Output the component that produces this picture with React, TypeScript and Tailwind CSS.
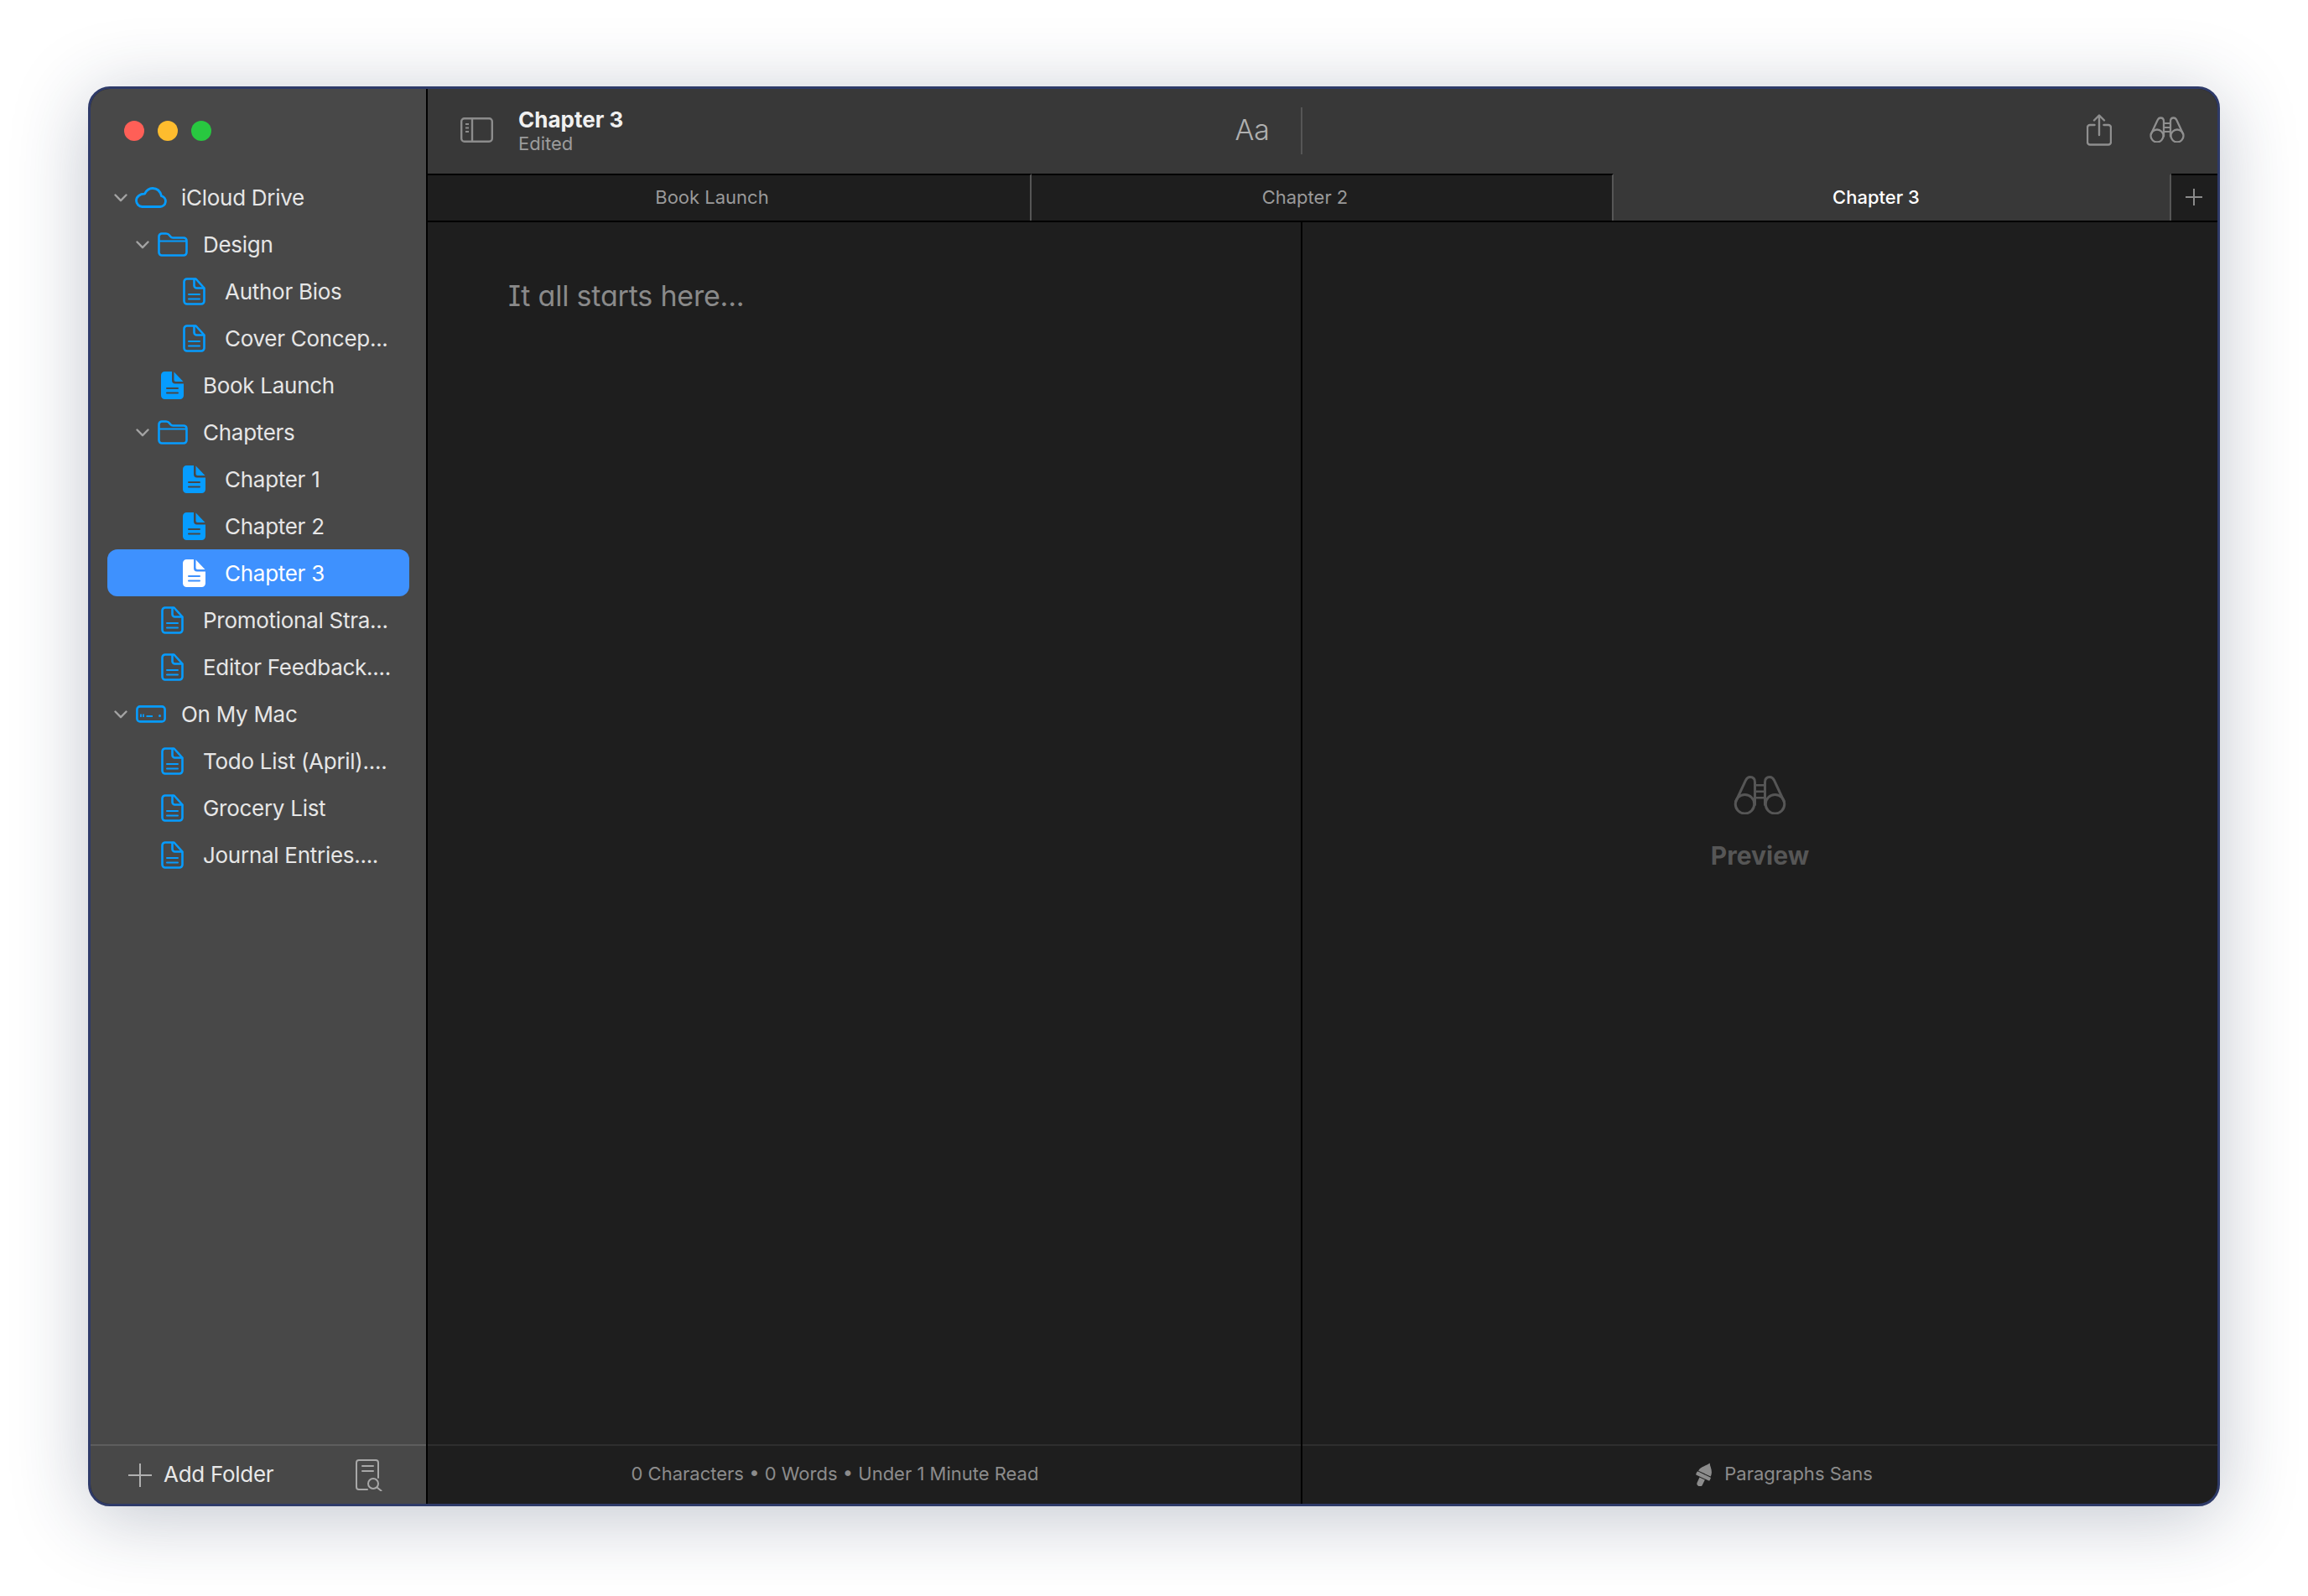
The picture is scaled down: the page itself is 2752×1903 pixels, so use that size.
import React from "react";

const BLUE = "#069cff";

function DocOutline() {
  return (
    <svg width="27" height="33" viewBox="0 0 27 33" fill="none" stroke={BLUE} strokeWidth="2.6" strokeLinejoin="round" strokeLinecap="round" className="ml-[5px] shrink-0">
      <path d="M5 1.5H15.5L25.5 12.5V28a3.5 3.5 0 0 1-3.5 3.5H5A3.5 3.5 0 0 1 1.5 28V5A3.5 3.5 0 0 1 5 1.5Z" />
      <path d="M13.5 2V9.5a3 3 0 0 0 3 3H25" />
      <path d="M7 20H20M7 25.5H20" strokeWidth="2" />
    </svg>
  );
}

function DocFilled({ selected }: { selected?: boolean }) {
  const fg = selected ? "#ffffff" : BLUE;
  const bg = selected ? "#3e91fe" : "#484848";
  return (
    <svg width="27" height="33" viewBox="0 0 27 33" className="ml-[5px] shrink-0">
      <path fill={fg} d="M4.5 0H13V10.5a4 4 0 0 0 4 4H27V28.5a4.5 4.5 0 0 1-4.5 4.5H4.5A4.5 4.5 0 0 1 0 28.5V4.5A4.5 4.5 0 0 1 4.5 0Z" />
      <path fill={fg} d="M15.5 .5L26.5 12H17.5a2 2 0 0 1-2-2Z" />
      <path d="M7 20H20M7 25.5H20" stroke={bg} strokeWidth="2" strokeLinecap="round" />
    </svg>
  );
}

function Cloud() {
  return (
    <svg width="38" height="25" viewBox="0 0 38 25" fill="none" stroke={BLUE} strokeWidth="2.8" strokeLinejoin="round" className="shrink-0">
      <path d="M8.5 23.5H30a6.5 6.5 0 0 0 1.5-12.8C30 5 26 1.5 21 1.5C16.5 1.5 13.5 4 11.5 8.2C6 8 1.5 11.5 1.5 16.2A7.4 7.4 0 0 0 8.5 23.5Z" />
    </svg>
  );
}

function Folder() {
  return (
    <svg width="36" height="29" viewBox="0 0 36 29" fill="none" stroke={BLUE} strokeWidth="2.6" strokeLinejoin="round" className="ml-px shrink-0">
      <path d="M1.5 5a3.5 3.5 0 0 1 3.5-3.5H10c2 0 3 .5 4 2l1.2 1.5c.8 1 1.8 1.5 3 1.5H31a3.5 3.5 0 0 1 3.5 3.5V24A3.5 3.5 0 0 1 31 27.5H5A3.5 3.5 0 0 1 1.5 24Z" />
      <path d="M1.5 10.5H34.5" strokeWidth="2.2" />
    </svg>
  );
}

function Drive() {
  return (
    <svg width="36" height="21" viewBox="0 0 36 21" fill="none" stroke={BLUE} strokeWidth="2.6" className="ml-px shrink-0">
      <rect x="1.4" y="1.4" width="33.2" height="18" rx="3.5" />
      <path d="M6 10.5V14M9 10.5V14" strokeWidth="1.8" />
      <path d="M12.5 13H20" strokeWidth="2" />
      <circle cx="28.5" cy="12.5" r="1.5" fill={BLUE} stroke="none" />
    </svg>
  );
}

function Chevron() {
  return (
    <svg width="16" height="10" viewBox="0 0 16 10" fill="none" stroke="#a3a3a3" strokeWidth="2.4" strokeLinecap="round" strokeLinejoin="round">
      <path d="M1.5 1.5L8 8.2L14.5 1.5" />
    </svg>
  );
}

function Binoculars({ w, h, color, sw }: { w: number; h: number; color: string; sw: number }) {
  return (
    <svg width={w} height={h} viewBox="0 0 42 31" fill="none" stroke={color} strokeWidth={sw} strokeLinecap="round" strokeLinejoin="round" className="shrink-0">
      <circle cx="9" cy="23" r="7.5" />
      <circle cx="33" cy="23" r="7.5" />
      <path d="M1.8 21L9.6 4.2C10.5 2.4 11.7 1.5 13.2 1.5C15.6 1.5 17 3 17 5.5V23.5" />
      <path d="M40.2 21L32.4 4.2C31.5 2.4 30.3 1.5 28.8 1.5C26.4 1.5 25 3 25 5.5V23.5" />
      <path d="M17 8H25M17 13H25M17 18H25" strokeWidth={sw * 0.85} />
    </svg>
  );
}

type Row = { name: string; level: 0 | 1 | 2; icon: "cloud" | "folder" | "drive" | "doc" | "filled"; chevron?: boolean; selected?: boolean };

const rows: Row[] = [
  { name: "iCloud Drive", level: 0, icon: "cloud", chevron: true },
  { name: "Design", level: 1, icon: "folder", chevron: true },
  { name: "Author Bios", level: 2, icon: "doc" },
  { name: "Cover Concep...", level: 2, icon: "doc" },
  { name: "Book Launch", level: 1, icon: "filled" },
  { name: "Chapters", level: 1, icon: "folder", chevron: true },
  { name: "Chapter 1", level: 2, icon: "filled" },
  { name: "Chapter 2", level: 2, icon: "filled" },
  { name: "Chapter 3", level: 2, icon: "filled", selected: true },
  { name: "Promotional Stra...", level: 1, icon: "doc" },
  { name: "Editor Feedback....", level: 1, icon: "doc" },
  { name: "On My Mac", level: 0, icon: "drive", chevron: true },
  { name: "Todo List (April)....", level: 1, icon: "doc" },
  { name: "Grocery List", level: 1, icon: "doc" },
  { name: "Journal Entries....", level: 1, icon: "doc" },
];

function TreeRow({ row }: { row: Row }) {
  const pad = row.level === 0 ? "pl-2" : row.level === 1 ? "pl-[34px]" : "pl-[60px]";
  return (
    <div className={`mx-5 flex h-14 items-center rounded-xl text-[26px] tracking-[-0.28px] ${pad} ${row.selected ? "bg-[#3e91fe] text-white" : "text-[#e6e6e6]"}`}>
      <div className="mr-[9px] flex w-4 shrink-0 items-center justify-center pt-0.5">{row.chevron && <Chevron />}</div>
      <div className="flex w-[55px] shrink-0 items-center pt-px">
        {row.icon === "cloud" && <Cloud />}
        {row.icon === "folder" && <Folder />}
        {row.icon === "drive" && <Drive />}
        {row.icon === "doc" && <DocOutline />}
        {row.icon === "filled" && <DocFilled selected={row.selected} />}
      </div>
      <span className="whitespace-nowrap pt-px">{row.name}</span>
    </div>
  );
}

function Tab({ label, active, cls }: { label: string; active?: boolean; cls: string }) {
  return (
    <div className={`flex items-center justify-center border-r-2 border-r-[#565656] pb-[2px] text-[22px] ${cls} ${active ? "border-t-2 border-t-[#383838] bg-[#383838] pr-[37px] font-medium text-white" : "border-t-2 border-t-black pr-10 text-[#9a9a9a]"}`}>
      {label}
    </div>
  );
}

export default function App() {
  return (
    <div className="h-[1903px] w-[2752px] overflow-hidden bg-white pl-[105px] pt-[103px] [font-family:Inter,sans-serif]">
      <div className="flex h-[1693px] w-[2542px] overflow-hidden rounded-[26px] border-[3px] border-[#2e3a68] bg-[#1e1e1e] shadow-[0_12px_90px_rgba(34,46,80,0.28)]">
        {/* Sidebar */}
        <aside className="flex w-[402px] shrink-0 flex-col border-r-2 border-r-black bg-[#484848]">
          <div className="flex h-[101px] shrink-0 items-center gap-4 pb-[2px] pl-10">
            <span className="size-6 rounded-full bg-[#ff5f57]" />
            <span className="size-6 rounded-full bg-[#febc2e]" />
            <span className="size-6 rounded-full bg-[#28c840]" />
          </div>
          <div className="flex-1">
            {rows.map((r) => (
              <TreeRow key={r.name} row={r} />
            ))}
          </div>
          <div className="flex h-[71px] shrink-0 items-center border-t-2 border-t-[#5e5e5e] pl-[45px]">
            <svg width="28" height="28" viewBox="0 0 28 28" stroke="#b0b0b0" strokeWidth="2" className="shrink-0">
              <path d="M14 0V28M0 14H28" />
            </svg>
            <span className="mb-[2px] ml-[14px] text-[26px] tracking-[-0.28px] text-[#e8e8e8]">Add Folder</span>
            <svg width="32" height="38" viewBox="0 0 32 38" fill="none" stroke="#a8a8a8" strokeWidth="2" strokeLinecap="round" strokeLinejoin="round" className="ml-[98px] shrink-0">
              <path d="M14 36H4a3 3 0 0 1-3-3V4a3 3 0 0 1 3-3H24a3 3 0 0 1 3 3V22" />
              <path d="M8 8H21M8 14H21" />
              <circle cx="21" cy="29" r="6" />
              <path d="M25.5 33.5L30.5 37.5" />
            </svg>
          </div>
        </aside>

        {/* Main */}
        <main className="flex min-w-0 flex-1 flex-col">
          <div className="flex h-[101px] shrink-0 items-center bg-[#383838]">
            <div className="flex h-full w-[1043px] shrink-0 items-center pl-[39px]">
              <svg width="39" height="30" viewBox="0 0 39 30" fill="none" stroke="#8c8c8c" strokeWidth="2.4" className="mb-[4px] shrink-0">
                <rect x="1.2" y="1.2" width="36.6" height="27.6" rx="3.5" />
                <path d="M14 1.5V28.5" />
                <path d="M6 8H10M6 12.5H10M6 17H10" strokeWidth="2" />
              </svg>
              <div className="mb-[2px] ml-[30px] flex flex-col">
                <span className="text-[26px] leading-[30px] font-bold text-[#f0f0f0]">Chapter 3</span>
                <span className="text-[22px] leading-[26px] text-[#9c9c9c]">Edited</span>
              </div>
              <span className="mb-[4px] ml-auto text-[34px] font-light text-[#b0b0b0]">Aa</span>
              <span className="mb-[2px] ml-[37px] h-14 w-0.5 bg-[#565656]" />
            </div>
            <div className="flex flex-1 items-center justify-end pb-[4px] pr-[39px]">
              <svg width="30" height="38" viewBox="0 0 30 38" fill="none" stroke="#8f8f8f" strokeWidth="2.4" strokeLinecap="round" strokeLinejoin="round" className="shrink-0">
                <path d="M9.5 13H4a3 3 0 0 0-3 3V33.5a3 3 0 0 0 3 3H26a3 3 0 0 0 3-3V16a3 3 0 0 0-3-3H20.5" />
                <path d="M15 25V2M9 7.5L15 1.5L21 7.5" />
              </svg>
              <div className="ml-[45px]">
                <Binoculars w={42} h={31} color="#8f8f8f" sw={2.3} />
              </div>
            </div>
          </div>

          <div className="flex h-[58px] shrink-0 border-b-2 border-b-black bg-[#1e1e1e]">
            <Tab label="Book Launch" cls="w-[720px]" />
            <Tab label="Chapter 2" cls="w-[694px]" />
            <Tab label="Chapter 3" cls="w-[665px]" active />
            <div className="flex flex-1 items-center justify-center border-t-2 border-t-black pb-[2px] pr-[2px]">
              <svg width="20" height="20" viewBox="0 0 20 20" stroke="#8a8a8a" strokeWidth="2">
                <path d="M10 0V20M0 10H20" />
              </svg>
            </div>
          </div>

          <div className="flex min-h-0 flex-1">
            <section className="flex w-[1043px] shrink-0 flex-col border-r-2 border-r-black">
              <div className="flex-1 pl-[96px] pt-[66px]">
                <p className="text-[34px] leading-[44px] tracking-[-0.2px] text-[#8a8a8a] [font-feature-settings:'cv11','cv08','ss03']">It all starts here...</p>
              </div>
              <div className="flex h-[71px] shrink-0 items-center justify-center border-t-2 border-t-[#2e2e2e] pb-[2px] pr-[70px] text-[22px] text-[#8c8c8c]">
                0 Characters • 0 Words • Under 1 Minute Read
              </div>
            </section>
            <section className="flex flex-1 flex-col">
              <div className="flex flex-1 flex-col items-center justify-center pb-[24px]">
                <Binoculars w={63} h={47} color="#565656" sw={2} />
                <span className="mt-[29px] text-[30px] leading-[40px] font-bold text-[#565656]">Preview</span>
              </div>
              <div className="flex h-[71px] shrink-0 items-center justify-center border-t-2 border-t-[#2e2e2e] pb-[2px] pl-[56px] text-[22px] text-[#8c8c8c]">
                <svg width="24" height="28" viewBox="0 0 24 28" fill="#8c8c8c" className="mr-3 shrink-0">
                  <g transform="rotate(25 12 14)">
                    <path d="M12.5 -1C14 3 20 5 20 13H4C4 7 10 4 12.5 -1Z" />
                    <rect x="3" y="14" width="18" height="4.5" rx="1" />
                    <path d="M8.5 19.5H15.5V26a3.5 3.5 0 0 1-7 0Z" />
                  </g>
                </svg>
                Paragraphs Sans
              </div>
            </section>
          </div>
        </main>
      </div>
    </div>
  );
}
